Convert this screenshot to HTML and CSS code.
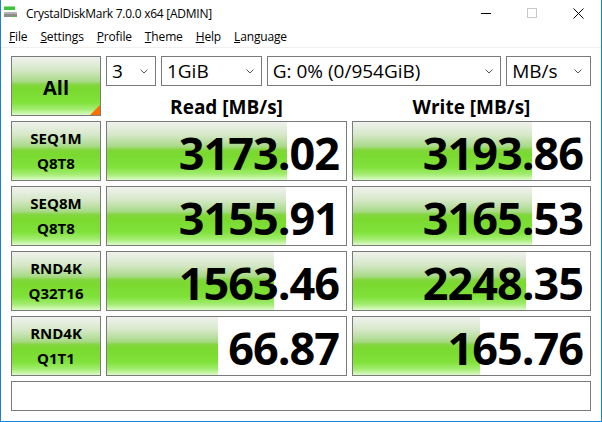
FILE: index.html
```html
<!DOCTYPE html>
<html lang="en">
<head>
    <meta charset="UTF-8">
    <title>CrystalDiskMark 7.0.0 x64 [ADMIN]</title>
    <link rel="stylesheet" href="styles.css">
</head>
<body>
    <div class="window">
        <div class="titlebar">
            <svg class="app-icon" width="16" height="16" viewBox="0 0 16 16">
                <rect x="3" y="5" width="11" height="4" fill="#3cc43c"/>
                <rect x="3" y="5" width="11" height="1" fill="#8fe38f"/>
                <rect x="3" y="11" width="13" height="9" fill="#8c8c8c"/>
                <rect x="3" y="11" width="13" height="2" fill="#b4b4b4"/>
                <rect x="11" y="15" width="3" height="2" fill="#3cd23c"/>
            </svg>
            <span class="title">CrystalDiskMark 7.0.0 x64 [ADMIN]</span>
            <div class="caption-buttons">
                <span class="cap-btn"><i class="min"></i></span>
                <span class="cap-btn"><i class="max"></i></span>
                <span class="cap-btn">
                    <svg width="11" height="11" viewBox="0 0 11 11"><path d="M0.5 0.5 L10.5 10.5 M10.5 0.5 L0.5 10.5" stroke="#000" stroke-width="1"/></svg>
                </span>
            </div>
        </div>

        <nav class="menubar">
            <span><u>F</u>ile</span>
            <span><u>S</u>ettings</span>
            <span><u>P</u>rofile</span>
            <span><u>T</u>heme</span>
            <span><u>H</u>elp</span>
            <span><u>L</u>anguage</span>
        </nav>

        <main class="bench">
            <div class="test all">All<span class="corner"></span></div>

            <div class="options">
                <div class="combo c-count"><span>3</span><svg width="8" height="5" viewBox="0 0 8 5"><path d="M0.5 0.5 L4 4 L7.5 0.5" fill="none" stroke="#555"/></svg></div>
                <div class="combo c-size"><span>1GiB</span><svg width="8" height="5" viewBox="0 0 8 5"><path d="M0.5 0.5 L4 4 L7.5 0.5" fill="none" stroke="#555"/></svg></div>
                <div class="combo c-drive"><span>G: 0% (0/954GiB)</span><svg width="8" height="5" viewBox="0 0 8 5"><path d="M0.5 0.5 L4 4 L7.5 0.5" fill="none" stroke="#555"/></svg></div>
                <div class="combo c-unit"><span>MB/s</span><svg width="8" height="5" viewBox="0 0 8 5"><path d="M0.5 0.5 L4 4 L7.5 0.5" fill="none" stroke="#555"/></svg></div>
            </div>

            <div class="col-head">Read [MB/s]</div>
            <div class="col-head">Write [MB/s]</div>

            <div class="test"><span>SEQ1M</span><span>Q8T8</span></div>
            <div class="result"><div class="bar" style="width: 75.2%"></div><span class="value">3173.02</span></div>
            <div class="result"><div class="bar" style="width: 75.5%"></div><span class="value">3193.86</span></div>

            <div class="test"><span>SEQ8M</span><span>Q8T8</span></div>
            <div class="result"><div class="bar" style="width: 74.8%"></div><span class="value">3155.91</span></div>
            <div class="result"><div class="bar" style="width: 75.5%"></div><span class="value">3165.53</span></div>

            <div class="test"><span>RND4K</span><span>Q32T16</span></div>
            <div class="result"><div class="bar" style="width: 69.7%"></div><span class="value">1563.46</span></div>
            <div class="result"><div class="bar" style="width: 73%"></div><span class="value">2248.35</span></div>

            <div class="test"><span>RND4K</span><span>Q1T1</span></div>
            <div class="result"><div class="bar" style="width: 46.6%"></div><span class="value">66.87</span></div>
            <div class="result"><div class="bar" style="width: 53.6%"></div><span class="value">165.76</span></div>

            <div class="comment"></div>
        </main>
    </div>
</body>
</html>
```

FILE: styles.css
```css
/* CrystalDiskMark main window */
body {
    margin: 0;
    padding: 0;
    background-color: #fff;
    font-family: "Open Sans", "Noto Sans", sans-serif;
    color: #000;
}

.window {
    width: 602px;
    height: 422px;
    box-sizing: border-box;
    border: 1px solid #1883d7;
    border-top: none;
    background-color: #fff;
    overflow: hidden;
}

/* Title bar */
.titlebar {
    display: flex;
    align-items: center;
    height: 28px;
}

.app-icon {
    flex: none;
    align-self: flex-start;
    margin-top: 1px;
}

.title {
    margin-left: 9px;
    font-size: 12px;
    letter-spacing: -0.25px;
    margin-top: -2px;
}

.caption-buttons {
    display: flex;
    margin-left: auto;
    height: 28px;
}

.cap-btn {
    width: 46px;
    display: flex;
    align-items: center;
    justify-content: center;
}

.cap-btn .min {
    width: 10px;
    height: 1px;
    background-color: #000;
    margin-top: -2px;
}

.cap-btn .max {
    width: 8px;
    height: 8px;
    border: 1px solid #c8c8c8;
    margin-top: -2px;
}

.cap-btn svg {
    margin-top: -1px;
}

/* Menu bar */
.menubar {
    display: flex;
    gap: 13px;
    height: 19px;
    padding-left: 8px;
    font-size: 12px;
    line-height: 17px;
    letter-spacing: -0.15px;
    border-bottom: 1px solid #f0f0f0;
}

.menubar u {
    text-underline-offset: 1px;
}

/* Benchmark grid */
.bench {
    display: grid;
    grid-template-columns: 90px 241px 239px;
    grid-template-rows: 30px 25px 60px 60px 60px 60px 30px;
    column-gap: 5px;
    row-gap: 5px;
    padding: 8px 0 0 10px;
}

.test {
    position: relative;
    display: flex;
    flex-direction: column;
    align-items: center;
    justify-content: center;
    border: 1px solid #7a7a7a;
    background: linear-gradient(180deg, #f0f2ee 0%, #d6e8c9 22%, #a9da88 42%, #82d63d 48%, #7ad92f 55%, #80e23a 78%, #a3ec71 90%, #dcfbc9 100%);
    font-weight: bold;
    font-size: 15px;
    line-height: 25px;
}

.test.all {
    grid-row: 1 / 3;
    font-size: 20px;
    padding-top: 3px;
    box-sizing: border-box;
}

.corner {
    position: absolute;
    right: 0;
    bottom: 0;
    width: 0;
    height: 0;
    border-style: solid;
    border-width: 0 0 10px 10px;
    border-color: transparent transparent #ff6f00 transparent;
}

.options {
    grid-column: 2 / 4;
    display: flex;
    gap: 5px;
}

.combo {
    display: flex;
    align-items: center;
    justify-content: space-between;
    box-sizing: border-box;
    height: 30px;
    padding: 0 7px 0 5px;
    border: 1px solid #7a7a7a;
    background-color: #fff;
    font-size: 19px;
}

.combo svg {
    flex: none;
    margin-top: 1px;
}

.c-count { width: 50px; }
.c-size { width: 101px; }
.c-drive { width: 235px; }
.c-unit { width: 85px; padding-right: 8px; }

.col-head {
    text-align: center;
    font-weight: bold;
    font-size: 19px;
    line-height: 25px;
    padding-top: 4px;
}

.result {
    position: relative;
    border: 1px solid #7a7a7a;
    background-color: #fff;
    overflow: hidden;
}

.bar {
    height: 100%;
    background: linear-gradient(180deg, #f0f2ee 0%, #d6e8c9 22%, #a9da88 42%, #82d63d 48%, #7ad92f 55%, #80e23a 78%, #a3ec71 90%, #dcfbc9 100%);
}

.value {
    position: absolute;
    right: 7px;
    top: 0;
    bottom: 0;
    display: flex;
    align-items: center;
    padding-top: 2px;
    font-weight: bold;
    font-size: 45px;
    letter-spacing: -1px;
}

.comment {
    grid-column: 1 / 4;
    border: 1px solid #7a7a7a;
    background-color: #fff;
}
```
